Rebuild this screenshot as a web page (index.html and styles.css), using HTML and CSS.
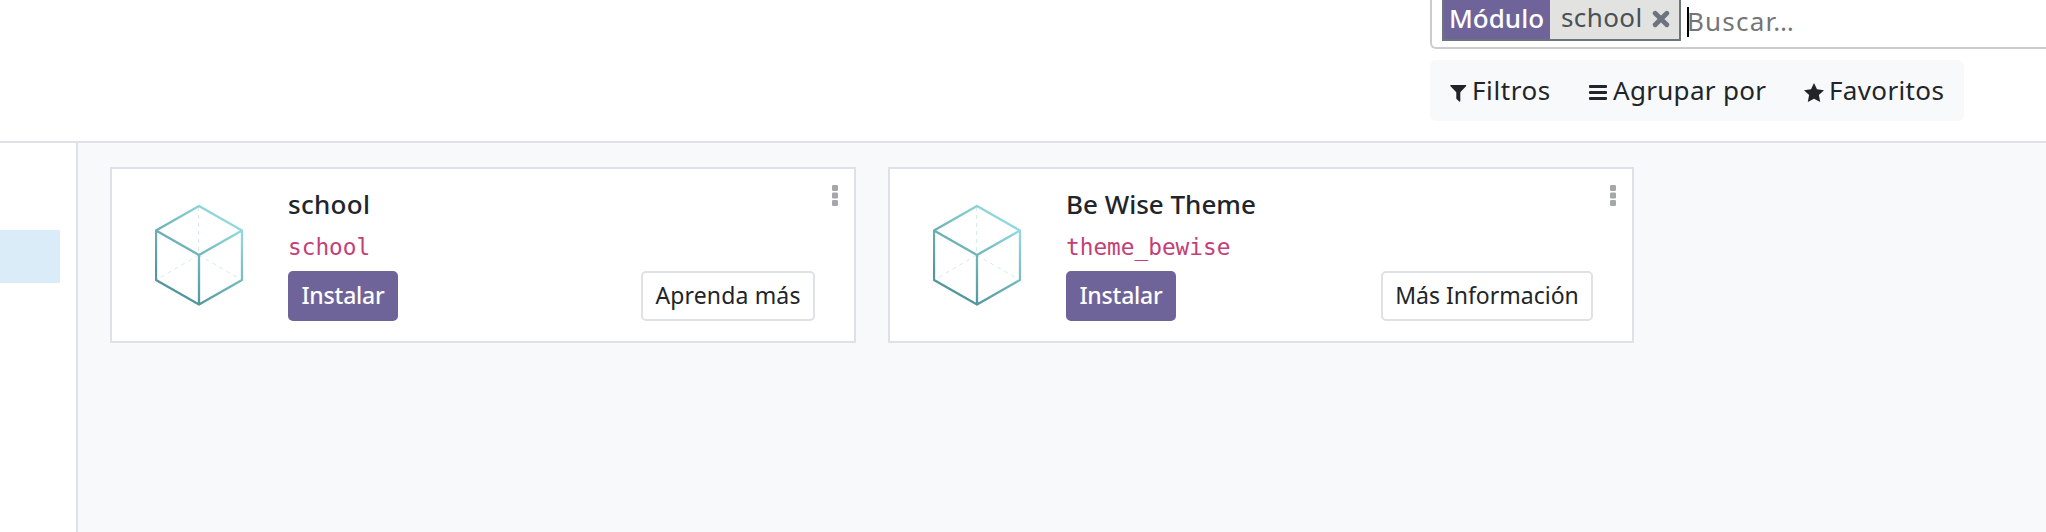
FILE: index.html
```
<!DOCTYPE html>
<html lang="es">
<head>
<meta charset="utf-8">
<title>Aplicaciones</title>
<link rel="stylesheet" href="styles.css">
</head>
<body>
<svg class="defs" width="0" height="0" aria-hidden="true">
  <defs>
    <linearGradient id="edge" gradientUnits="userSpaceOnUse" x1="75" y1="20" x2="22" y2="84">
      <stop offset="0" stop-color="#90d8dd"/>
      <stop offset="1" stop-color="#52979c"/>
    </linearGradient>
    <symbol id="cube" viewBox="0 0 88 102">
      <g fill="none" stroke="#d3ecec" stroke-width="1" stroke-dasharray="4 4">
        <path d="M43.6 3V51M43.6 51L3 75M43.6 51L85 75"/>
      </g>
      <path d="M44 2L87 26.5V76L44 100.5L1 76V26.5ZM1 26.5L44 51L87 26.5M44 51V100.5" fill="none" stroke="url(#edge)" stroke-width="2.3" stroke-linejoin="round"/>
    </symbol>
  </defs>
</svg>
<header class="control-panel">
  <div class="search">
    <div class="search-box">
      <div class="facet">
        <span class="facet-label"><span class="t-modulo">Módulo</span></span>
        <span class="facet-value"><span class="t-value">school</span>
          <svg class="remove" width="18" height="18" viewBox="0 0 18 18"><path d="M3.2 3.2L14.8 14.8M14.8 3.2L3.2 14.8" stroke="#6c757d" stroke-width="4.8" stroke-linecap="round"/></svg>
        </span>
      </div>
      <span class="caret"></span><span class="placeholder">Buscar…</span>
    </div>
    <div class="options">
      <span class="option filters"><svg width="17" height="17" viewBox="0 0 17 17"><path d="M.6 0H15.8Q16.6.3 16 1.2L10.3 7.2V16Q10 17 9.2 16.5L6.3 13.8V7.2L.5 1.2Q0 .4.6 0Z"/></svg><span class="t-filtros">Filtros</span></span>
      <span class="option groups"><svg width="18" height="16" viewBox="0 0 18 16"><path d="M1 0H17Q18 0 18 1V2Q18 3 17 3H1Q0 3 0 2V1Q0 0 1 0ZM1 6H17Q18 6 18 7V8Q18 9 17 9H1Q0 9 0 8V7Q0 6 1 6ZM1 12H17Q18 12 18 13V14Q18 15 17 15H1Q0 15 0 14V13Q0 12 1 12Z"/></svg><span class="t-agrupar">Agrupar por</span></span>
      <span class="option favs"><svg width="20" height="19" viewBox="0 0 20 19"><path d="M10 0L13 6.2L20 7.2L14.9 12L16.2 19L10 15.7L3.8 19L5.1 12L0 7.2L7 6.2Z"/></svg><span class="t-favoritos">Favoritos</span></span>
    </div>
  </div>
</header>
<main class="content">
  <aside class="sidebar"><div class="active-item"></div></aside>
  <section class="cards">
    <article class="card">
      <svg class="icon" width="88" height="102"><use href="#cube"/></svg>
      <div class="body">
        <h2><span class="t-school">school</span></h2>
        <code class="c-school">school</code>
        <div class="actions"><button class="install">Instalar</button><button class="more learn">Aprenda más</button></div>
      </div>
      <svg class="dots" width="6" height="21" viewBox="0 0 6 21"><rect width="6" height="6" rx="1.3"/><rect y="7.5" width="6" height="6" rx="1.3"/><rect y="15" width="6" height="6" rx="1.3"/></svg>
    </article>
    <article class="card">
      <svg class="icon" width="88" height="102"><use href="#cube"/></svg>
      <div class="body">
        <h2><span class="t-bewise">Be Wise Theme</span></h2>
        <code class="c-bewise">theme_bewise</code>
        <div class="actions"><button class="install">Instalar</button><button class="more info">Más Información</button></div>
      </div>
      <svg class="dots" width="6" height="21" viewBox="0 0 6 21"><rect width="6" height="6" rx="1.3"/><rect y="7.5" width="6" height="6" rx="1.3"/><rect y="15" width="6" height="6" rx="1.3"/></svg>
    </article>
  </section>
</main>
</body>
</html>
```
FILE: styles.css
```
* { box-sizing: border-box; }
body {
  margin: 0;
  width: 2046px;
  height: 532px;
  overflow: hidden;
  display: flex;
  flex-direction: column;
  background: #fff;
  color: #212529;
  font-family: "Noto Sans", sans-serif;
  font-size: 26px;
  white-space: nowrap;
}
svg { display: block; flex: none; }
.defs { position: absolute; }
.control-panel {
  height: 143px;
  flex: none;
  border-bottom: 2px solid #dee2e6;
  padding-left: 1430px;
}
.search-box {
  height: 49px;
  border: 2px solid #ccc;
  border-top: 0;
  border-right: 0;
  border-bottom-left-radius: 6px;
  padding-left: 10px;
  display: flex;
  align-items: flex-start;
}
.facet {
  width: 239px;
  height: 41px;
  border: 2px solid #6c757d;
  border-top: 0;
  display: flex;
  line-height: 36px;
}
.facet-label {
  width: 106px;
  padding-left: 5px;
  background: #6f6499;
  color: #fff;
  font-weight: 500;
}
.facet-value {
  flex: 1;
  display: flex;
  justify-content: space-between;
  padding: 0 9px 0 11px;
  background: #e2e2e0;
  color: #495057;
}
.t-value { margin-top: -1px; letter-spacing: .4px; }
.remove { margin-top: 10px; }
.caret { width: 2px; height: 30px; margin: 7px 0 0 6px; background: #000; }
.placeholder { line-height: 36px; margin-top: 3px; color: #757575; margin-left: -2px; letter-spacing: 1.2px; }
.options {
  width: 534px;
  height: 61px;
  margin-top: 11px;
  padding-left: 20px;
  background: #f8f9fb;
  border-radius: 6px;
  display: flex;
  line-height: 60px;
}
.option { display: flex; }
.option svg { fill: #212529; margin-top: 25px; }
.filters { width: 139px; gap: 5px; }
.groups { width: 215px; gap: 6px; }
.favs { gap: 5px; }
.favs svg { margin-top: 23px; }
.t-filtros { letter-spacing: .6px; }
.t-agrupar { letter-spacing: .3px; }
.t-favoritos { letter-spacing: .35px; }
.content { flex: 1; display: flex; background: #f8f9fb; }
.sidebar {
  width: 78px;
  border-right: 2px solid #dee2e6;
  background: #fff;
  padding-top: 87px;
}
.active-item { width: 60px; height: 53px; background: #d9ecf8; }
.cards { display: flex; align-items: flex-start; gap: 32px; padding: 24px 0 0 32px; }
.card {
  width: 746px;
  height: 176px;
  border: 2px solid #dee2e6;
  background: #fff;
  display: flex;
}
.icon { margin: 35px 0 0 43px; }
.body { width: 527px; margin: 0 17px 0 45px; padding-top: 17px; }
h2 { margin: 0; font-size: 26px; font-weight: 500; line-height: 36px; height: 37px; }
.t-school { letter-spacing: .3px; }
code {
  display: block;
  height: 48px;
  line-height: 48px;
  font-family: "DejaVu Sans Mono", monospace;
  font-size: 22.75px;
  color: #c43e78;
}
.actions { display: flex; justify-content: space-between; }
button {
  height: 50px;
  padding: 0 0 2px;
  border: 2px solid #dee2e6;
  border-radius: 5px;
  background: #fff;
  color: #212529;
  font: 500 23px/44px "Noto Sans", sans-serif;
}
.install { width: 110px; background: #6f6499; border-color: #6f6499; color: #fff; letter-spacing: -.2px; }
.more { font-weight: 400; }
.learn { width: 174px; letter-spacing: .15px; }
.info { width: 212px; letter-spacing: 0; }
.dots { margin-top: 16px; fill: #a5a7a9; }
```
